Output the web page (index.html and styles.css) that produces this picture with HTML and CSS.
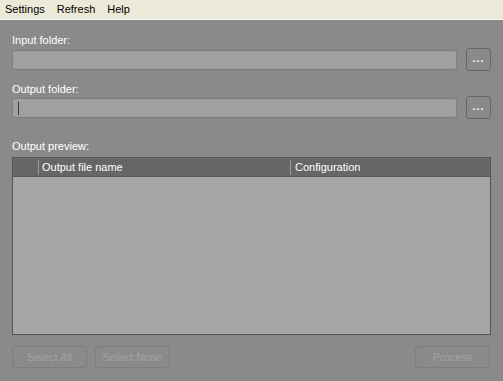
FILE: index.html
```html
<!DOCTYPE html>
<html lang="en">
<head>
    <meta charset="UTF-8">
    <title>Batch Rename</title>
    <link rel="stylesheet" href="styles.css">
</head>
<body>
    <div class="menubar">
        <span class="menu-item">Settings</span>
        <span class="menu-item">Refresh</span>
        <span class="menu-item">Help</span>
    </div>
    <div class="main">
        <div class="label label-first">Input folder:</div>
        <div class="field-row">
            <div class="field"></div>
            <button class="browse">...</button>
        </div>
        <div class="label label-second">Output folder:</div>
        <div class="field-row">
            <div class="field"><span class="caret"></span></div>
            <button class="browse">...</button>
        </div>
        <div class="label label-preview">Output preview:</div>
        <div class="table">
            <div class="table-head">
                <div class="col col-check"></div>
                <div class="col col-name">Output file name</div>
                <div class="col col-config">Configuration</div>
            </div>
            <div class="table-body"></div>
        </div>
        <div class="buttons">
            <button class="btn" disabled>Select All</button>
            <button class="btn" disabled>Select None</button>
            <span class="spacer"></span>
            <button class="btn" disabled>Process</button>
        </div>
    </div>
</body>
</html>
```
FILE: styles.css
```css
body {
    margin: 0;
    background: #8a8a8a;
    font-family: "Liberation Sans", Arial, sans-serif;
    font-size: 11px;
    line-height: 13px;
    height: 381px;
    overflow: hidden;
}
.menubar {
    height: 19px;
    background: #ece9d8;
    border-bottom: 1px solid #f6f5ef;
    display: flex;
    padding-left: 5px;
}
.menu-item {
    color: #000;
    margin-right: 12px;
    line-height: 18px;
}
.main {
    padding: 0 12px;
}
.label {
    color: #fff;
}
.label-first {
    padding-top: 14px;
    margin-bottom: 1px;
}
.label-second {
    margin-top: 12px;
}
.label-preview {
    margin-top: 21px;
    margin-bottom: 4px;
}
.field-row {
    display: flex;
    align-items: center;
    gap: 9px;
    height: 23px;
}
.field {
    flex: 1;
    height: 20px;
    box-sizing: border-box;
    background: #a0a0a0;
    border: 1px solid #7e7e7e;
    border-radius: 2px;
    position: relative;
}
.caret {
    position: absolute;
    left: 5px;
    top: 3px;
    width: 1px;
    height: 13px;
    background: #3a3a3a;
}
.browse {
    width: 25px;
    height: 23px;
    padding: 0 0 3px;
    background: #8a8a8a;
    border: 1px solid #686868;
    border-radius: 3px;
    color: #fff;
    font-family: inherit;
    font-size: 11px;
    font-weight: bold;
    letter-spacing: 1px;
}
.table {
    height: 178px;
    box-sizing: border-box;
    border: 1px solid #555;
    display: flex;
    flex-direction: column;
}
.table-head {
    height: 19px;
    background: #666;
    border-top: 1px solid #707070;
    border-bottom: 1px solid #585858;
    display: flex;
    color: #fff;
    box-sizing: border-box;
}
.col {
    line-height: 17px;
    padding-left: 4px;
    box-sizing: border-box;
}
.col-check {
    width: 25px;
    padding: 0;
}
.col-name,
.col-config {
    border-left: 1px solid #9a9a9a;
    margin: 1px 0;
    line-height: 15px;
}
.col-name {
    width: 252px;
    padding-left: 3px;
}
.col-config {
    flex: 1;
}
.table-body {
    flex: 1;
    background: #a6a6a6;
}
.buttons {
    display: flex;
    gap: 8px;
    margin-top: 11px;
}
.spacer {
    flex: 1;
}
.btn {
    width: 75px;
    height: 22px;
    background: #8a8a8a;
    border: 1px solid #7d7d7d;
    border-radius: 3px;
    color: #a2a2a2;
    font-family: inherit;
    font-size: 11px;
    padding: 0;
}
.btn:last-child {
    margin-right: 1px;
}
```
